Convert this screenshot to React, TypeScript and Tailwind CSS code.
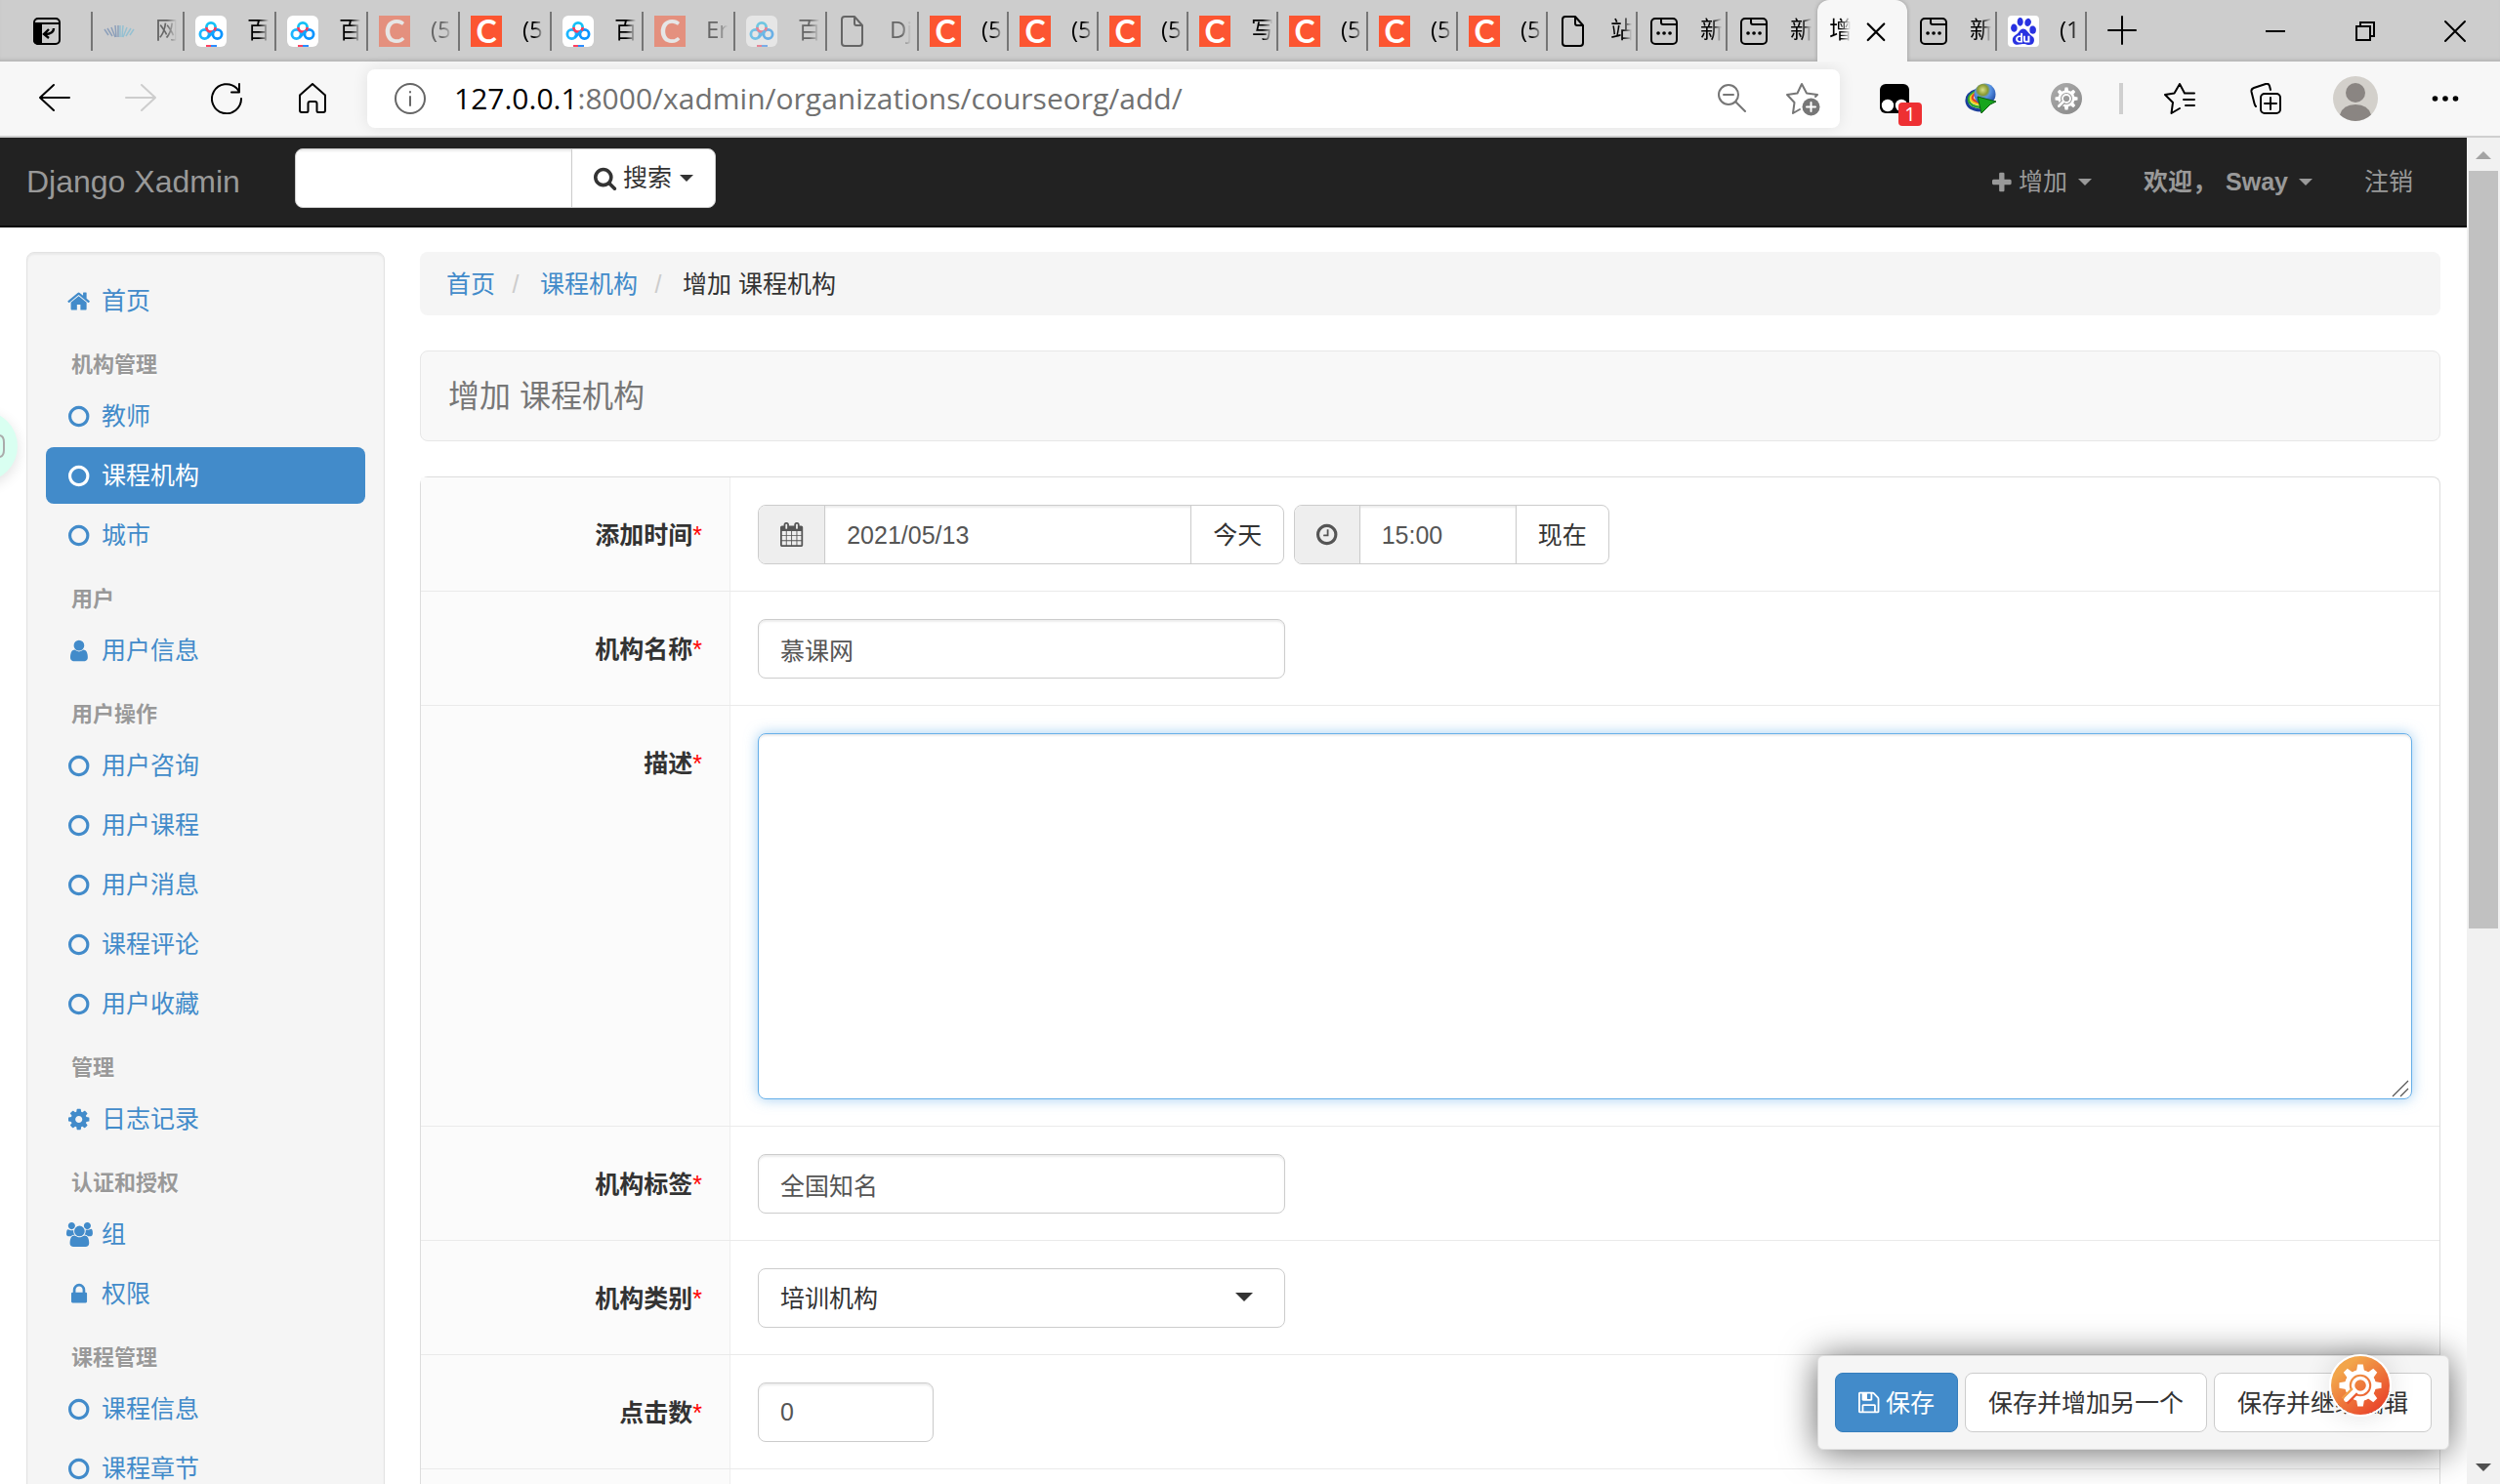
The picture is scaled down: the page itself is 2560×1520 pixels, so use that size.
import React from "react";
import { SiBaidu } from "react-icons/si";

const P = {
  home: "M1408 992v480q0 26-19 45t-45 19h-384v-384h-256v384h-384q-26 0-45-19t-19-45v-480q0-1 .5-3t.5-3l575-474 575 474q1 2 1 6zm223-69l-62 74q-8 9-21 11h-3q-13 0-21-7l-692-577-692 577q-12 8-24 7-13-2-21-11l-62-74q-8-10-7-23.5t11-21.5l719-599q32-26 76-26t76 26l244 204v-195q0-14 9-23t23-9h192q14 0 23 9t9 23v408l219 182q10 8 11 21.5t-7 23.5z",
  circle: "M768 352q-148 0-273 73t-198 198-73 273 73 273 198 198 273 73 273-73 198-198 73-273-73-273-198-198-273-73zm768 544q0 209-103 385.5t-279.5 279.5-385.5 103-385.5-103-279.5-279.5-103-385.5 103-385.5 279.5-279.5 385.5-103 385.5 103 279.5 279.5 103 385.5z",
  user: "M1280 1399q0 109-62.5 187t-150.5 78h-854q-88 0-150.5-78t-62.5-187q0-85 8.5-160.5t31.5-152 58.5-131 94-89 134.5-34.5q131 128 313 128t313-128q76 0 134.5 34.5t94 89 58.5 131 31.5 152 8.5 160.5zm-256-887q0 159-112.5 271.5t-271.5 112.5-271.5-112.5-112.5-271.5 112.5-271.5 271.5-112.5 271.5 112.5 112.5 271.5z",
  gear: "M1024 896q0-106-75-181t-181-75-181 75-75 181 75 181 181 75 181-75 75-181zm512-109v222q0 12-8 23t-20 13l-185 28q-19 54-39 91 35 50 107 138 10 12 10 25t-9 23q-27 37-99 108t-94 71q-12 0-26-9l-138-108q-44 23-91 38-16 136-29 186-7 28-36 28h-222q-14 0-24.5-8.5t-11.5-21.5l-28-184q-49-16-90-37l-141 107q-10 9-25 9-14 0-25-11-126-114-165-168-7-10-7-23 0-12 8-23 15-21 51-66.5t54-70.5q-27-50-41-99l-183-27q-13-2-21-12.5t-8-23.5v-222q0-12 8-23t19-13l186-28q14-46 39-92-40-57-107-138-10-12-10-24 0-10 9-23 26-36 98.5-107.5t94.5-71.5q13 0 26 10l138 107q44-23 91-38 16-136 29-186 7-28 36-28h222q14 0 24.5 8.5t11.5 21.5l28 184q49 16 90 37l142-107q9-9 24-9 13 0 25 10 129 119 165 170 7 8 7 22 0 12-8 23-15 21-51 66.5t-54 70.5q26 50 41 98l183 28q13 2 21 12.5t8 23.5z",
  users: "M593 896q-162 5-265 128h-134q-82 0-138-40.5t-56-118.5q0-353 124-353 6 0 43.5 21t97.5 42.5 119 21.5q67 0 133-23-5 37-5 66 0 159 93 290zm1071 637q0 120-73 189.5t-194 69.5h-874q-121 0-194-69.5t-73-189.5q0-53 3.5-103.5t14-109 26.5-108.5 43-97.5 62-81 85.5-53.5 111.5-20q10 0 43 21.5t73 48 107 48 135 21.5 135-21.5 107-48 73-48 43-21.5q61 0 111.5 20t85.5 53.5 62 81 43 97.5 26.5 108.5 14 109 3.5 103.5zm-1024-1277q0 106-75 181t-181 75-181-75-75-181 75-181 181-75 181 75 75 181zm704 384q0 159-112.5 271.5t-271.5 112.5-271.5-112.5-112.5-271.5 112.5-271.5 271.5-112.5 271.5 112.5 112.5 271.5zm576 225q0 78-56 118.5t-138 40.5h-134q-103-123-265-128 93-131 93-290 0-29-5-66 66 23 133 23 59 0 119-21.5t97.5-42.5 43.5-21q124 0 124 353zm-128-609q0 106-75 181t-181 75-181-75-75-181 75-181 181-75 181 75 75 181z",
  lock: "M320 768h512v-192q0-106-75-181t-181-75-181 75-75 181v192zm832 96v576q0 40-28 68t-68 28h-960q-40 0-68-28t-28-68v-576q0-40 28-68t68-28h32v-192q0-184 132-316t316-132 316 132 132 316v192h32q40 0 68 28t28 68z",
  search: "M1152 832q0-185-131.5-316.5t-316.5-131.5-316.5 131.5-131.5 316.5 131.5 316.5 316.5 131.5 316.5-131.5 131.5-316.5zm512 832q0 52-38 90t-90 38q-54 0-90-38l-343-342q-179 124-399 124-143 0-273.5-55.5t-225-150-150-225-55.5-273.5 55.5-273.5 150-225 225-150 273.5-55.5 273.5 55.5 225 150 150 225 55.5 273.5q0 220-124 399l343 343q37 37 37 90z",
  plus: "M1408 800v192q0 40-28 68t-68 28h-416v416q0 40-28 68t-68 28h-192q-40 0-68-28t-28-68v-416h-416q-40 0-68-28t-28-68v-192q0-40 28-68t68-28h416v-416q0-40 28-68t68-28h192q40 0 68 28t28 68v416h416q40 0 68 28t28 68z",
  calendar: "M128 1664h288v-288h-288v288zm352 0h320v-288h-320v288zm-352-352h288v-320h-288v320zm352 0h320v-320h-320v320zm-352-384h288v-288h-288v288zm736 736h320v-288h-320v288zm-384-736h320v-288h-320v288zm768 736h288v-288h-288v288zm-384-352h320v-320h-320v320zm-352-864v-288q0-13-9.5-22.5t-22.5-9.5h-64q-13 0-22.5 9.5t-9.5 22.5v288q0 13 9.5 22.5t22.5 9.5h64q13 0 22.5-9.5t9.5-22.5zm736 864h288v-320h-288v320zm-384-384h320v-288h-320v288zm384 0h288v-288h-288v288zm32-480v-288q0-13-9.5-22.5t-22.5-9.5h-64q-13 0-22.5 9.5t-9.5 22.5v288q0 13 9.5 22.5t22.5 9.5h64q13 0 22.5-9.5t9.5-22.5zm384-64v1280q0 52-38 90t-90 38h-1408q-52 0-90-38t-38-90v-1280q0-52 38-90t90-38h128v-96q0-66 47-113t113-47h64q66 0 113 47t47 113v96h384v-96q0-66 47-113t113-47h64q66 0 113 47t47 113v96h128q52 0 90 38t38 90z",
  clock: "M896 544v448q0 14-9 23t-23 9h-320q-14 0-23-9t-9-23v-64q0-14 9-23t23-9h224v-352q0-14 9-23t23-9h64q14 0 23 9t9 23zm416 352q0-148-73-273t-198-198-273-73-273 73-198 198-73 273 73 273 198 198 273 73 273-73 198-198 73-273zm224 0q0 209-103 385.5t-279.5 279.5-385.5 103-385.5-103-279.5-279.5-103-385.5 103-385.5 279.5-279.5 385.5-103 385.5 103 279.5 279.5 103 385.5z",
  save: "M384 1536h768v-384h-768v384zm896 0h128v-896q0-14-10-38.5t-20-34.5l-281-281q-10-10-34-20t-39-10v416q0 40-28 68t-68 28h-576q-40 0-68-28t-28-68v-416h-128v1280h128v-416q0-40 28-68t68-28h832q40 0 68 28t28 68v416zm-384-928v-320q0-13-9.5-22.5t-22.5-9.5h-192q-13 0-22.5 9.5t-9.5 22.5v320q0 13 9.5 22.5t22.5 9.5h192q13 0 22.5-9.5t9.5-22.5zm640 32v928q0 40-28 68t-68 28h-1344q-40 0-68-28t-28-68v-1344q0-40 28-68t68-28h928q40 0 88 20t76 48l280 280q28 28 48 76t20 88z",
};
const UNITS: Record<keyof typeof P, number> = {
  home: 1664, circle: 1536, user: 1280, gear: 1536, users: 1920, lock: 1152,
  search: 1664, plus: 1408, calendar: 1664, clock: 1536, save: 1536,
};

function Glyph({ name }: { name: keyof typeof P }) {
  return (
    <svg viewBox={`0 0 ${UNITS[name]} 1792`} className="h-[25px] w-auto shrink-0 overflow-visible" fill="currentColor" aria-hidden="true">
      <path d={P[name]} />
    </svg>
  );
}

function Caret() {
  return <span className="inline-block border-x-[7px] border-t-[7px] border-x-transparent border-t-current" />;
}

function Line({ children, className = "size-8", w = 2 }: { children: React.ReactNode; className?: string; w?: number }) {
  return (
    <svg viewBox="0 0 32 32" className={className} fill="none" stroke="currentColor" strokeWidth={w} strokeLinecap="round" strokeLinejoin="round" aria-hidden="true">
      {children}
    </svg>
  );
}

/* ---------- tab strip ---------- */

type Fav = "wave" | "pan" | "c" | "doc" | "app" | "du";
type Tab = { fav: Fav; title: string; dim?: boolean; wide?: boolean; last?: boolean };

const TABS: Tab[] = [
  { fav: "wave", title: "网", dim: true, wide: true },
  { fav: "pan", title: "百", wide: true },
  { fav: "pan", title: "百", wide: true },
  { fav: "c", title: "(5", dim: true, wide: true },
  { fav: "c", title: "(5", wide: true },
  { fav: "pan", title: "百", wide: true },
  { fav: "c", title: "Er", dim: true, wide: true },
  { fav: "pan", title: "百", dim: true, wide: true },
  { fav: "doc", title: "Dj", dim: true, wide: true },
  { fav: "c", title: "(5" },
  { fav: "c", title: "(5" },
  { fav: "c", title: "(5" },
  { fav: "c", title: "写" },
  { fav: "c", title: "(5" },
  { fav: "c", title: "(5" },
  { fav: "c", title: "(5" },
  { fav: "doc", title: "站" },
  { fav: "app", title: "新" },
  { fav: "app", title: "新", last: true },
];

function Favicon({ kind }: { kind: Fav }) {
  switch (kind) {
    case "c":
      return (
        <span className="flex size-8 shrink-0 items-center justify-center bg-[#fc5531] font-['Lato',sans-serif] text-[32px] leading-8 font-bold text-white">C</span>
      );
    case "pan":
      return (
        <svg viewBox="0 0 32 32" className="size-8 shrink-0" fill="none" aria-hidden="true">
          <rect width="32" height="32" rx="6" fill="#fff" />
          <circle cx="9.5" cy="19" r="4.6" stroke="#1cb6ff" strokeWidth="2.8" />
          <circle cx="22.5" cy="19" r="4.6" stroke="#0a94ff" strokeWidth="2.8" />
          <path d="M11.4 12A4.6 4.6 0 1 1 20.6 12" stroke="#14c0f5" strokeWidth="2.8" />
          <path d="M11.4 12A4.6 4.6 0 0 0 20.6 12" stroke="#ff3b5c" strokeWidth="2.8" />
          <path d="M12.5 22.5L19.6 15.4" stroke="#0fa6ff" strokeWidth="2.8" />
          <rect x="11" y="30" width="5" height="2" fill="#ff4060" />
          <rect x="16" y="30" width="6" height="2" fill="#2a8cff" />
        </svg>
      );
    case "doc":
      return (
        <Line className="size-8 shrink-0">
          <path d="M7 1h10l8 9v18a3 3 0 0 1-3 3H7a3 3 0 0 1-3-3V4a3 3 0 0 1 3-3zM17 1v7a2 2 0 0 0 2 2h6" />
        </Line>
      );
    case "app":
      return (
        <Line className="size-8 shrink-0">
          <rect x="3" y="3" width="26" height="26" rx="4" />
          <path d="M13 3v4q0 2 2 2h14" />
          <path d="M10 18h.1M16 18h.1M22 18h.1" strokeWidth="3.6" />
        </Line>
      );
    case "du":
      return (
        <span className="flex size-8 shrink-0 items-center justify-center rounded bg-white text-[#2932e1]">
          <SiBaidu size={28} />
        </span>
      );
    default:
      return (
        <svg viewBox="0 0 32 32" className="size-8 shrink-0" fill="none" strokeWidth="1.5" aria-hidden="true">
          <g stroke="#4f74a8">
            <path d="M1 14l4 6M4 13l5 8M8 12l4 10M12 10l1 12M15 10v12" />
          </g>
          <g stroke="#5fb4d6">
            <path d="M31 14l-4 6M28 13l-5 8M24 12l-4 10M20 10l-1 12M17 10v12" />
          </g>
        </svg>
      );
  }
}

function TabItem({ tab }: { tab: Tab }) {
  return (
    <button
      type="button"
      className={`flex h-10 shrink-0 items-center gap-[21px] border-r-2 pl-[11px] ${tab.wide ? "w-[94px]" : "w-[92px]"} ${tab.last ? "border-transparent" : "border-[#767676]"}`}
    >
      <span className={tab.dim ? "opacity-50" : ""}>
        <Favicon kind={tab.fav} />
      </span>
      <span className={`w-6 pb-[3px] text-left text-2xl leading-8 whitespace-nowrap [mask-image:linear-gradient(to_right,#000_12px,transparent_22px)] ${tab.dim ? "text-[#666]" : ""}`}>
        {tab.title}
      </span>
    </button>
  );
}

function TabStrip() {
  return (
    <div className="flex h-[63px] shrink-0 items-center bg-[#cdcdcd] text-black shadow-[inset_0_-4px_4px_-3px_#aaa]">
      <button type="button" aria-label="标签页操作" className="ml-8 shrink-0">
        <svg viewBox="0 0 32 32" className="size-8" fill="none" stroke="#000" strokeWidth="2" aria-hidden="true">
          <rect x="3" y="3" width="26" height="26" rx="4" />
          <path d="M3 8h26" />
          <path d="M3 8h7v21H7a4 4 0 0 1-4-4z" fill="#000" />
          <path d="M23 13q0 6-9 6M18 14l-5 5 5 4" strokeWidth="2.4" />
        </svg>
      </button>
      <div className="ml-[29px] flex shrink-0 items-center border-l-2 border-[#767676]">
        {TABS.map((t, i) => (
          <TabItem key={i} tab={t} />
        ))}
      </div>
      <div className="flex h-full w-[92px] shrink-0 items-center rounded-t-xl bg-[#f7f7f7] pl-3 shadow-[0_0_4px_#999] [clip-path:inset(0_-4px_0_-4px)]">
        <span className="w-6 pb-[3px] text-2xl leading-8 whitespace-nowrap [mask-image:linear-gradient(to_right,#000_12px,transparent_22px)]">增</span>
        <button type="button" aria-label="关闭标签页" className="ml-3">
          <Line className="size-6" w={3}><path d="M5 6l22 22M27 6L5 28" /></Line>
        </button>
      </div>
      <TabItem tab={{ fav: "app", title: "新" }} />
      <TabItem tab={{ fav: "du", title: "(1" }} />
      <button type="button" aria-label="新建标签页" className="ml-5 shrink-0">
        <Line><path d="M2 15h28M16 1v28" /></Line>
      </button>
      <div className="ml-auto flex h-14 shrink-0">
        <button type="button" aria-label="最小化" className="flex w-[92px] items-center justify-center">
          <Line><path d="M6 16h20" strokeLinecap="butt" /></Line>
        </button>
        <button type="button" aria-label="还原" className="flex w-[92px] items-center justify-center">
          <Line><path d="M7 11h14v14H7zM11 11V7h14v14h-4" strokeLinejoin="miter" /></Line>
        </button>
        <button type="button" aria-label="关闭" className="flex w-[92px] items-center justify-center">
          <Line><path d="M6 6l20 20M26 6L6 26" /></Line>
        </button>
      </div>
    </div>
  );
}

/* ---------- address bar ---------- */

function CogArt({ id, from, to, size }: { id: string; from: string; to: string; size: string }) {
  const teeth = [0, 45, 90, 135, 180, 225, 270, 315];
  return (
    <svg viewBox="0 0 64 64" className={size} aria-hidden="true">
      <defs>
        <linearGradient id={id} x1="0.1" y1="0.1" x2="0.8" y2="0.95">
          <stop offset="0.15" stopColor={from} />
          <stop offset="1" stopColor={to} />
        </linearGradient>
      </defs>
      <circle cx="32" cy="32" r="32" fill={`url(#${id})`} />
      <g fill="#fff">
        {teeth.map((a) => (
          <path key={a} d="M27.5 18l1.5-9h6l1.5 9z" transform={`rotate(${a} 32 32)`} />
        ))}
      </g>
      <circle cx="32" cy="32" r="14.5" fill="none" stroke="#fff" strokeWidth="5" />
      <circle cx="32" cy="32" r="8" fill="none" stroke="#fff" strokeWidth="3.6" />
      <path d="M26 38L15 49" stroke={`url(#${id})`} strokeWidth="10" />
      <path d="M26 38L16.5 47.5" stroke="#fff" strokeWidth="5" strokeLinecap="round" />
    </svg>
  );
}

function Toolbar() {
  return (
    <div className="flex h-[78px] shrink-0 items-center border-b-2 border-[#cfcfcf] bg-[#f7f7f7] text-black">
      <div className="flex shrink-0 items-center gap-14 pr-10 pl-10">
        <button type="button" aria-label="后退"><Line><path d="M31 15H1M15 2L1 15l14 13" /></Line></button>
        <button type="button" aria-label="前进" className="text-[#cdcdcd]"><Line><path d="M1 15h30M17 2l14 13-14 13" /></Line></button>
        <button type="button" aria-label="刷新"><Line><path d="M31 16A15 15 0 1 1 26.5 5.5L29 9M29 1v8.5h-8" /></Line></button>
        <button type="button" aria-label="主页"><Line><path d="M3 12.5L16 1l13 11.5V28a2 2 0 0 1-2 2h-5a1.5 1.5 0 0 1-1.5-1.5V21a2 2 0 0 0-2-2h-5a2 2 0 0 0-2 2v7.5A1.5 1.5 0 0 1 10 30H5a2 2 0 0 1-2-2z" /></Line></button>
      </div>
      <div className="flex h-[60px] min-w-0 flex-1 items-center rounded-lg bg-white pr-5 pl-6 shadow-[0_0_16px_rgba(0,0,0,0.09)]">
        <button type="button" aria-label="查看站点信息" className="ml-1 text-[#666]">
          <Line><circle cx="16" cy="16" r="15" /><path d="M16 14v9M16 9v.5" /></Line>
        </button>
        <div role="textbox" aria-label="地址栏" className="ml-[29px] min-w-0 flex-1 truncate text-[30px] leading-10 text-[#717171]">
          <span className="text-black">127.0.0.1</span>:8000/xadmin/organizations/courseorg/add/
        </div>
        <button type="button" aria-label="缩小" className="text-[#767676]">
          <Line><circle cx="13" cy="12" r="10" /><path d="M8 12h10M20.5 19.5L30 29" /></Line>
        </button>
        <button type="button" aria-label="添加到收藏夹" className="ml-[39px] text-[#767676]">
          <Line className="h-8 w-9 overflow-visible">
            <path d="M13 27l-7 4 1.5-11L0 12l10.5-1.5L15 1l5 9.5 11 1.5-2 2" />
            <circle cx="24.5" cy="24.5" r="9" fill="currentColor" stroke="none" />
            <path d="M24.5 20v9M20 24.5h9" stroke="#fff" />
          </Line>
        </button>
      </div>
      <div className="flex shrink-0 items-center pr-10 pl-10">
        <button type="button" aria-label="扩展 1" className="relative">
          <svg viewBox="0 0 32 32" className="size-8" aria-hidden="true">
            <rect x="1" y="1" width="30" height="30" rx="6" />
            <circle cx="9" cy="23" r="6.2" fill="#fff" />
            <circle cx="23" cy="23" r="6.2" fill="#fff" />
          </svg>
          <span className="absolute top-5 left-5 flex h-6 w-6 items-center justify-center rounded bg-[#ee3033] text-xl leading-6 text-white">1</span>
        </button>
        <button type="button" aria-label="下载扩展" className="ml-14">
          <svg viewBox="0 0 32 32" className="size-8" fill="none" aria-hidden="true">
            <defs>
              <radialGradient id="globe" cx="0.4" cy="0.3" r="0.8">
                <stop offset="0" stopColor="#d8e08a" />
                <stop offset="0.3" stopColor="#8a9a30" />
                <stop offset="0.45" stopColor="#5a96e8" />
                <stop offset="1" stopColor="#123a94" />
              </radialGradient>
            </defs>
            <path d="M13 7Q1 11 2 19T16 28" stroke="#1c3f9c" strokeWidth="3" />
            <path d="M13 8Q3 12 4 18T17 25" stroke="#2fa52f" strokeWidth="2.5" />
            <path d="M13 9Q5 13 6 17T17 22" stroke="#f2d21c" strokeWidth="2.5" />
            <path d="M12 10Q7 13 8 16T17 20" stroke="#e0482a" strokeWidth="2.5" />
            <circle cx="20.5" cy="11.5" r="11" fill="url(#globe)" />
            <path d="M13 14l19 5-6 3-9 9z" fill="#17a51d" stroke="#0a5c10" strokeWidth="1" />
          </svg>
        </button>
        <button type="button" aria-label="设置扩展" className="ml-14">
          <CogArt id="cogGray" from="#a5a5a5" to="#8c8c8c" size="size-8" />
        </button>
        <span className="mr-[42px] ml-[38px] h-8 w-1 bg-[#cfcfcf]" />
        <button type="button" aria-label="收藏夹">
          <Line><path d="M16 26l-8.5 5L9 20 1 12l9.5-1.5L16 1l5 9.5h10M20 17h11M22 23h9" /></Line>
        </button>
        <button type="button" aria-label="集锦" className="ml-14">
          <Line><path d="M6 24q-1-1-1.5-3L1.5 9Q1 6 4 5L16 1q3-1 4 2l1 4" /><rect x="11" y="11" width="20" height="20" rx="4" /><path d="M21 15v12M15 21h12" /></Line>
        </button>
        <button type="button" aria-label="用户配置" className="ml-[53px]">
          <svg viewBox="0 0 46 46" className="size-[46px]" aria-hidden="true">
            <circle cx="23" cy="23" r="23" fill="#d3d0cb" />
            <circle cx="23" cy="17" r="10" fill="#8a8582" />
            <path d="M7 39.5Q10 29 23 29t16 10.5A23 23 0 0 1 7 39.5z" fill="#8a8582" />
          </svg>
        </button>
        <button type="button" aria-label="设置及其他" className="ml-[53px]">
          <svg viewBox="0 0 32 32" className="size-8" aria-hidden="true">
            <circle cx="5.5" cy="16" r="2.8" /><circle cx="16" cy="16" r="2.8" /><circle cx="26.5" cy="16" r="2.8" />
          </svg>
        </button>
      </div>
    </div>
  );
}

/* ---------- page ---------- */

function Navbar() {
  return (
    <nav className="flex h-[92px] items-center border-b-2 border-[#080808] bg-[#222] pr-[55px] pl-[27px] text-[#999]">
      <a href="#" className="text-[32px] leading-10">Django Xadmin</a>
      <form className="mb-2 ml-14 flex h-[61px] overflow-hidden rounded-lg border border-[#ccc] bg-white text-[#333]">
        <input type="text" aria-label="搜索" className="w-[283px] border-r border-[#ccc] px-5 shadow-[inset_0_2px_2px_rgba(0,0,0,0.08)] outline-none" />
        <button type="button" className="flex items-center px-[22px]">
          <Glyph name="search" />
          <span className="mr-2 ml-[7px]">搜索</span>
          <Caret />
        </button>
      </form>
      <div className="ml-auto flex items-center gap-[53px]">
        <a href="#" className="flex items-center">
          <Glyph name="plus" />
          <span className="mr-[11px] ml-[7px]">增加</span>
          <Caret />
        </a>
        <a href="#" className="flex items-center font-bold">
          <span>欢迎，</span>
          <span className="mr-[11px] ml-[9px]">Sway</span>
          <Caret />
        </a>
        <a href="#">注销</a>
      </div>
    </nav>
  );
}

type Item = { icon: keyof typeof P; text: string; active?: boolean };
const GROUPS: { title?: string; items: Item[] }[] = [
  { items: [{ icon: "home", text: "首页" }] },
  { title: "机构管理", items: [{ icon: "circle", text: "教师" }, { icon: "circle", text: "课程机构", active: true }, { icon: "circle", text: "城市" }] },
  { title: "用户", items: [{ icon: "user", text: "用户信息" }] },
  { title: "用户操作", items: [{ icon: "circle", text: "用户咨询" }, { icon: "circle", text: "用户课程" }, { icon: "circle", text: "用户消息" }, { icon: "circle", text: "课程评论" }, { icon: "circle", text: "用户收藏" }] },
  { title: "管理", items: [{ icon: "gear", text: "日志记录" }] },
  { title: "认证和授权", items: [{ icon: "users", text: "组" }, { icon: "lock", text: "权限" }] },
  { title: "课程管理", items: [{ icon: "circle", text: "课程信息" }, { icon: "circle", text: "课程章节" }, { icon: "circle", text: "课程视频" }] },
];

function Sidebar() {
  return (
    <aside className="w-[367px] shrink-0 self-start rounded-lg border border-[#e3e3e3] bg-[#f5f5f5] px-[19px] pt-5 pb-10 shadow-[inset_0_2px_2px_rgba(0,0,0,0.05)]">
      {GROUPS.map((g, i) => (
        <div key={i}>
          {g.title && (
            <h5 className="h-[57px] pt-[14px] pl-[26px] text-[22px] leading-10 font-bold text-[#999] [text-shadow:0_2px_0_rgba(255,255,255,0.5)]">{g.title}</h5>
          )}
          <ul>
            {g.items.map((it) => (
              <li key={it.text} className="mb-[3px]">
                <a href="#" className={`flex h-[58px] items-center rounded-lg pl-[18px] ${it.active ? "bg-[#428bca] text-white" : "text-[#428bca]"}`}>
                  <span className="flex w-8 justify-center"><Glyph name={it.icon} /></span>
                  <span className="ml-[7px]">{it.text}</span>
                </a>
              </li>
            ))}
          </ul>
        </div>
      ))}
    </aside>
  );
}

function Row({ label, htmlFor, children }: { label: string; htmlFor: string; children: React.ReactNode }) {
  return (
    <div className="flex border-b border-[#eaeaea]">
      <label htmlFor={htmlFor} className="w-[317px] shrink-0 border-r border-[#eee] bg-[#fbfbfb] pt-[39px] pr-7 text-right leading-10 font-bold text-[#333]">
        {label}
        <span className="font-normal text-[#f00]">*</span>
      </label>
      <div className="flex min-w-0 flex-1 gap-[10px] px-7 pt-7 pb-[27px]">{children}</div>
    </div>
  );
}

const FIELD = "h-[61px] rounded-lg border border-[#ccc] bg-white px-[22px] text-[#555] shadow-[inset_0_2px_2px_rgba(0,0,0,0.08)] outline-none";

function FieldGroup({ icon, id, label, value, action, width }: { icon: keyof typeof P; id: string; label: string; value: string; action: string; width: string }) {
  return (
    <div className="flex h-[61px] overflow-hidden rounded-lg border border-[#ccc] text-[#555]">
      <span className="flex items-center border-r border-[#ccc] bg-[#eee] px-[22px]"><Glyph name={icon} /></span>
      <input id={id} aria-label={label} type="text" defaultValue={value} className={`${width} px-[22px] shadow-[inset_0_2px_2px_rgba(0,0,0,0.08)] outline-none`} />
      <button type="button" className="border-l border-[#ccc] px-[22px] text-[#333]">{action}</button>
    </div>
  );
}

function Main() {
  return (
    <main className="min-w-0 flex-1 text-[#333]">
      <ol className="flex h-[65px] items-center rounded-lg bg-[#f5f5f5] px-[27px]">
        <li><a href="#" className="text-[#428bca]">首页</a></li>
        <li className="w-[46px] pr-1 text-center text-[#ccc]">/</li>
        <li><a href="#" className="text-[#428bca]">课程机构</a></li>
        <li className="w-[46px] pr-1 text-center text-[#ccc]">/</li>
        <li>增加 课程机构</li>
      </ol>
      <h2 className="mt-9 flex h-[93px] items-center rounded-lg border border-[#e7e7e7] bg-[#f8f8f8] px-7 text-[32px] leading-10 text-[#777]">增加 课程机构</h2>
      <form className="mt-9 rounded-t-lg border border-b-0 border-[#ddd] bg-white">
        <Row label="添加时间" htmlFor="date">
          <FieldGroup icon="calendar" id="date" label="日期" value="2021/05/13" action="今天" width="w-[374px]" />
          <FieldGroup icon="clock" id="time" label="时间" value="15:00" action="现在" width="w-[159px]" />
        </Row>
        <Row label="机构名称" htmlFor="name">
          <input id="name" type="text" defaultValue="慕课网" className={`${FIELD} w-[540px]`} />
        </Row>
        <Row label="描述" htmlFor="desc">
          <div className="relative flex flex-1">
            <textarea id="desc" className="h-[375px] flex-1 resize-none rounded-lg border border-[#66afe9] p-5 shadow-[inset_0_2px_2px_rgba(0,0,0,0.07),0_0_14px_rgba(102,175,233,0.6)] outline-none" />
            <svg viewBox="0 0 18 18" className="absolute right-[3px] bottom-[2px] size-[18px]" stroke="#555" strokeWidth="1.2" aria-hidden="true">
              <path d="M1 17L17 1M9 17l8-8" />
            </svg>
          </div>
        </Row>
        <Row label="机构标签" htmlFor="tag">
          <input id="tag" type="text" defaultValue="全国知名" className={`${FIELD} w-[540px]`} />
        </Row>
        <Row label="机构类别" htmlFor="category">
          <div className="relative">
            <select id="category" className="h-[61px] w-[540px] appearance-none rounded-lg border border-[#ccc] bg-white px-[22px] outline-none">
              <option>培训机构</option>
            </select>
            <span className="pointer-events-none absolute top-[25px] right-[33px] border-x-[9px] border-t-[9px] border-x-transparent border-t-[#333]" />
          </div>
        </Row>
        <Row label="点击数" htmlFor="clicks">
          <input id="clicks" type="text" defaultValue="0" className={`${FIELD} w-[180px]`} />
        </Row>
        <Row label="收藏数" htmlFor="favs">
          <input id="favs" type="text" defaultValue="0" className={`${FIELD} w-[180px]`} />
        </Row>
      </form>
    </main>
  );
}

function SaveBar() {
  return (
    <div className="absolute right-[18px] bottom-[35px] flex gap-[7px] rounded-md border border-[#ddd] bg-[#f5f5f5] px-[17px] py-[17px] shadow-[0_2px_36px_rgba(0,0,0,0.6)]">
      <button type="button" className="flex h-[61px] items-center gap-[7px] rounded-lg border border-[#357ebd] bg-[#428bca] px-[23px] text-white">
        <Glyph name="save" />保存
      </button>
      <button type="button" className="h-[61px] rounded-lg border border-[#ccc] bg-white px-[23px]">保存并增加另一个</button>
      <button type="button" className="h-[61px] rounded-lg border border-[#ccc] bg-white px-[23px]">保存并继续编辑</button>
      <button type="button" aria-label="工具" className="absolute -top-[2px] right-[58px] size-16 rounded-full border-2 border-white shadow-[0_0_28px_rgba(0,0,0,0.12)]">
        <CogArt id="cogOrange" from="#f2a54a" to="#e9432a" size="size-full" />
      </button>
    </div>
  );
}

export default function App() {
  return (
    <div className="flex h-screen flex-col overflow-hidden bg-white font-['Open_Sans','Noto_Sans_CJK_SC',sans-serif]">
      <TabStrip />
      <Toolbar />
      <div className="flex min-h-0 flex-1 font-['Liberation_Sans','Noto_Sans_CJK_SC',sans-serif] text-[25px] leading-9 text-[#333]">
        <div className="relative min-w-0 flex-1 overflow-hidden">
          <Navbar />
          <div className="flex gap-9 px-[27px] pt-[25px]">
            <Sidebar />
            <Main />
          </div>
          <button type="button" aria-label="展开" className="absolute top-[280px] -left-[54px] flex size-[72px] items-center justify-end rounded-full bg-[#d9fff1] shadow-[0_4px_14px_rgba(0,0,0,0.12)]">
            <svg viewBox="0 0 6 24" className="mr-3 h-6 w-[6px]" fill="none" stroke="#aaa" strokeWidth="2" aria-hidden="true">
              <path d="M0 1q4 1 4 7v8q0 6-4 7" />
            </svg>
          </button>
          <SaveBar />
        </div>
        <div className="flex w-[34px] shrink-0 flex-col items-center bg-[#f1f1f1]">
          <span className="mt-[14px] border-x-8 border-b-8 border-x-transparent border-b-[#a3a3a3]" />
          <div className="mt-3 h-[776px] w-[30px] bg-[#c1c1c1]" />
          <span className="mt-auto mb-[13px] border-x-8 border-t-8 border-x-transparent border-t-[#505050]" />
        </div>
      </div>
    </div>
  );
}
